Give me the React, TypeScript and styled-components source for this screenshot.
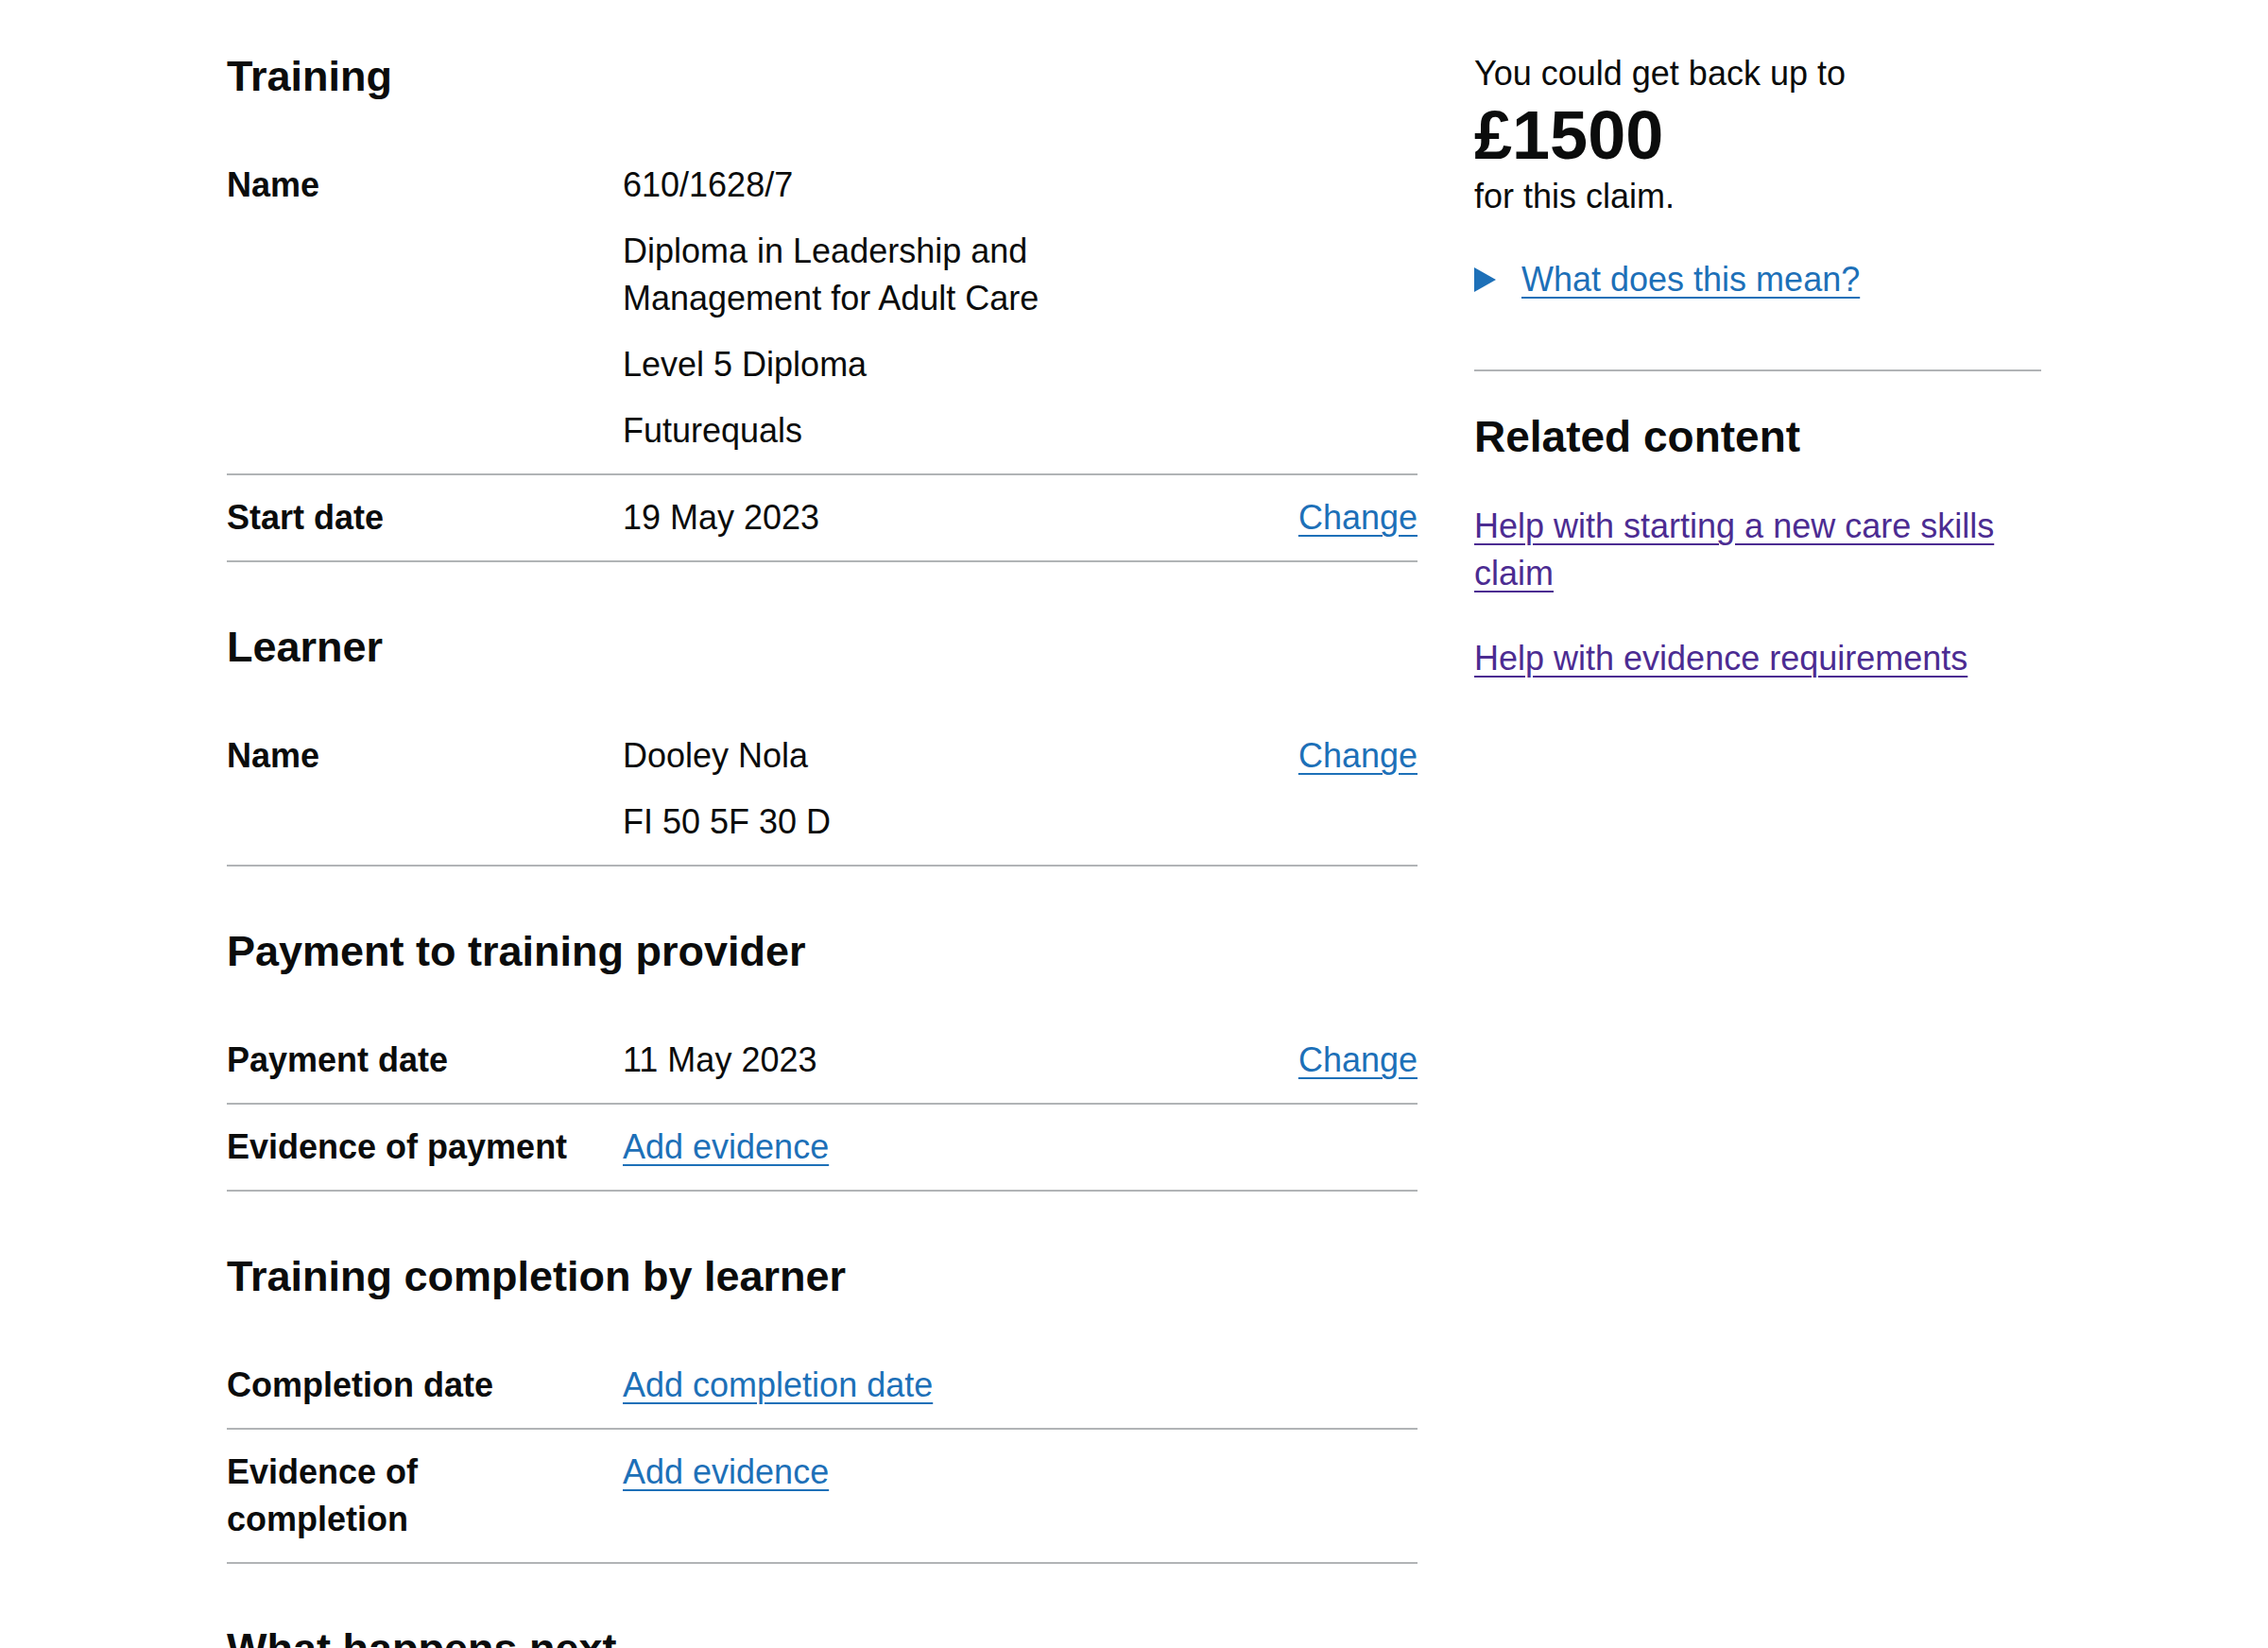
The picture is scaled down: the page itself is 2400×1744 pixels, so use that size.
import React from "react";
import styled, { createGlobalStyle } from "styled-components";

const GlobalStyle = createGlobalStyle`
	body {
		margin: 0;
		background: #ffffff;
		color: #0b0c0c;
		font-family: "Liberation Sans", Arial, sans-serif;
	}
`;

const Page = styled.div`
	width: 1920px;
	margin: 0 auto;
	padding-top: 51px;
	display: grid;
	grid-template-columns: 1260px 600px;
	column-gap: 60px;
	align-items: start;
`;

const Main = styled.main`
	display: flex;
	flex-direction: column;
`;

const Aside = styled.aside`
	display: flex;
	flex-direction: column;
	padding-top: 2px;
`;

const Heading = styled.h2`
	margin: 0 0 40px;
	font-size: 45px;
	line-height: 60px;
	font-weight: 700;
	color: #0b0c0c;
`;

const SummaryList = styled.dl`
	margin: 0 0 60px;
`;

const SummaryRow = styled.div`
	display: grid;
	grid-template-columns: 419px 630px 1fr;
	border-bottom: 2px solid #b1b4b6;
`;

const Key = styled.dt`
	padding: 20px 30px 20px 0;
	font-size: 36px;
	line-height: 50px;
	font-weight: 700;
`;

const Value = styled.dd`
	margin: 0;
	padding: 20px 40px 20px 0;
	font-size: 36px;
	line-height: 50px;
`;

const ValueLine = styled.p`
	margin: 0 0 20px;

	&:last-child {
		margin-bottom: 0;
	}
`;

const Actions = styled.dd`
	margin: 0;
	padding: 20px 0;
	font-size: 36px;
	line-height: 50px;
	text-align: right;
`;

const Link = styled.a`
	color: #1d70b8;
	text-decoration: underline;
	text-decoration-thickness: 2px;
	text-underline-offset: 0.16em;
`;

const VisitedLink = styled(Link)`
	color: #4c2c92;
`;

const Body = styled.p<{ $gap?: number }>`
	margin: 0 0 ${(p) => p.$gap ?? 0}px;
	font-size: 36px;
	line-height: 50px;
`;

const Amount = styled.p`
	margin: 0;
	font-size: 72px;
	line-height: 80px;
	font-weight: 700;
`;

const Details = styled.details`
	margin: 0 0 70px;
	font-size: 36px;
	line-height: 50px;
`;

const Summary = styled.summary`
	display: flex;
	align-items: center;
	list-style: none;
	cursor: pointer;

	&::-webkit-details-marker {
		display: none;
	}
`;

const Triangle = styled.span`
	width: 23px;
	height: 26px;
	margin-right: 27px;
	background: #1d70b8;
	clip-path: polygon(0% 0%, 100% 50%, 0% 100%);
	flex-shrink: 0;
`;

const Rule = styled.hr`
	margin: 0 0 39px;
	border: 0;
	border-top: 2px solid #b1b4b6;
	height: 0;
`;

const RelatedHeading = styled(Heading)`
	font-size: 46px;
`;

const RelatedList = styled.ul`
	margin: 0;
	padding: 0;
	list-style: none;
	font-size: 36px;
	line-height: 50px;

	li {
		margin-bottom: 40px;
	}
`;

interface Row {
	key: string;
	values: React.ReactNode[];
	action?: string;
}

interface Section {
	title: string;
	rows: Row[];
}

const sections: Section[] = [
	{
		title: "Training",
		rows: [
			{
				key: "Name",
				values: [
					"610/1628/7",
					"Diploma in Leadership and Management for Adult Care",
					"Level 5 Diploma",
					"Futurequals",
				],
			},
			{ key: "Start date", values: ["19 May 2023"], action: "Change" },
		],
	},
	{
		title: "Learner",
		rows: [
			{ key: "Name", values: ["Dooley Nola", "FI 50 5F 30 D"], action: "Change" },
		],
	},
	{
		title: "Payment to training provider",
		rows: [
			{ key: "Payment date", values: ["11 May 2023"], action: "Change" },
			{ key: "Evidence of payment", values: [<Link href="#">Add evidence</Link>] },
		],
	},
	{
		title: "Training completion by learner",
		rows: [
			{ key: "Completion date", values: [<Link href="#">Add completion date</Link>] },
			{ key: "Evidence of completion", values: [<Link href="#">Add evidence</Link>] },
		],
	},
];

const App: React.FC = () => {
	return (
		<>
			<GlobalStyle />
			<Page>
				<Main>
					{sections.map((section) => (
						<div key={section.title}>
							<Heading>{section.title}</Heading>
							<SummaryList>
								{section.rows.map((row) => (
									<SummaryRow key={row.key}>
										<Key>{row.key}</Key>
										<Value>
											{row.values.map((v, i) => (
												<ValueLine key={i}>{v}</ValueLine>
											))}
										</Value>
										<Actions>
											{row.action && <Link href="#">{row.action}</Link>}
										</Actions>
									</SummaryRow>
								))}
							</SummaryList>
						</div>
					))}
					<Heading>What happens next</Heading>
				</Main>
				<Aside>
					<Body>You could get back up to</Body>
					<Amount>£1500</Amount>
					<Body $gap={38}>for this claim.</Body>
					<Details>
						<Summary>
							<Triangle />
							<Link href="#">What does this mean?</Link>
						</Summary>
					</Details>
					<Rule />
					<RelatedHeading>Related content</RelatedHeading>
					<RelatedList>
						<li>
							<VisitedLink href="#">Help with starting a new care skills claim</VisitedLink>
						</li>
						<li>
							<VisitedLink href="#">Help with evidence requirements</VisitedLink>
						</li>
					</RelatedList>
				</Aside>
			</Page>
		</>
	);
};

export default App;
